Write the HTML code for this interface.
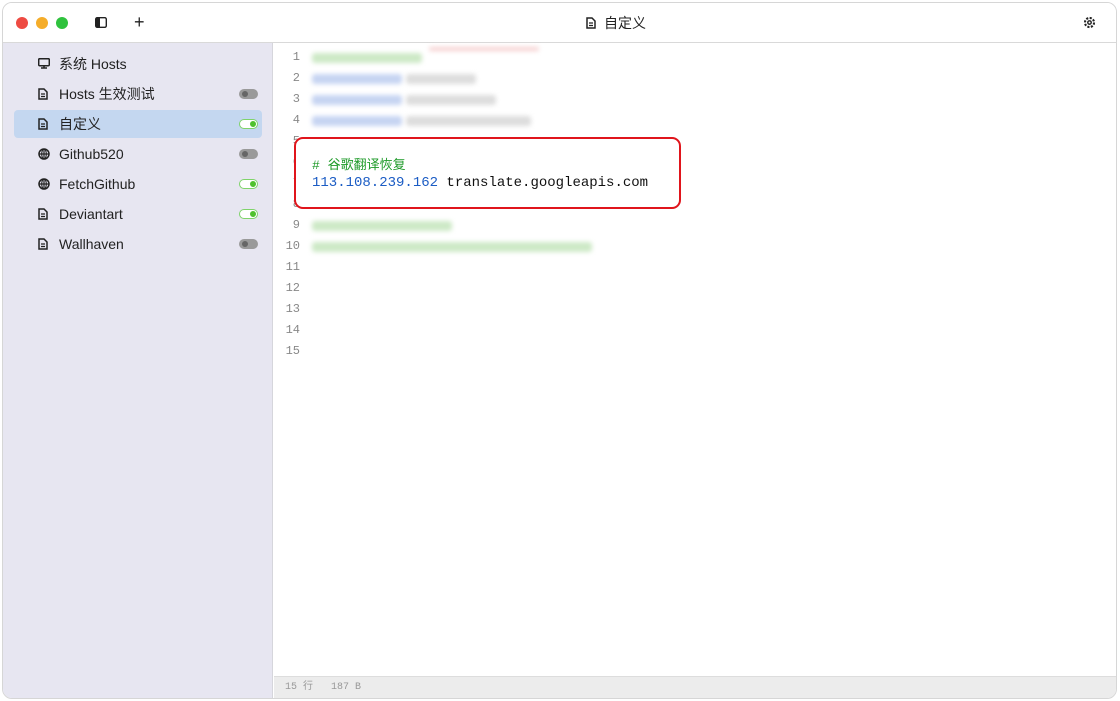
<!DOCTYPE html>
<html><head><meta charset="utf-8"><style>
*{margin:0;padding:0;box-sizing:border-box}
body{width:1120px;height:701px;background:#fff;font-family:"Liberation Sans","Noto Sans CJK SC",sans-serif;position:relative;overflow:hidden}
.win{position:absolute;left:2px;top:2px;width:1115px;height:697px;border:1px solid #d6d6d6;border-radius:10px;overflow:hidden;background:#fff}
.title{position:absolute;left:0;top:0;right:0;height:40px;background:#fff;border-bottom:1px solid #d9d9d9}
.dot{position:absolute;top:14px;width:12px;height:12px;border-radius:50%}
.side{position:absolute;left:0;top:40px;width:270px;bottom:0;background:#e7e6f1;border-right:1px solid #d6d6dc}
.item{position:absolute;left:11px;width:248px;height:28px;font-size:14px;color:#222;line-height:28px;padding-left:45px}
.item.sel{background:#c4d7f0;border-radius:4px}
.ic{position:absolute;left:24px;top:8px}
.tg{position:absolute;right:4px;top:9px;width:19px;height:10px;border-radius:5px;background:#9a9a9a}
.tg::after{content:"";position:absolute;top:2px;left:3px;width:6px;height:6px;border-radius:50%;background:#666}
.tg.on{background:#fff;border:1px solid #7fd36a}
.tg.on::after{left:10px;top:1px;background:#4fc12e}
.ed{position:absolute;left:271px;top:40px;right:0;bottom:22px;background:#fff}
.ln{position:absolute;left:0;width:26px;text-align:right;font-family:"Liberation Mono",monospace;font-size:12px;color:#888}
.blur{position:absolute;height:10px;filter:blur(2.5px);border-radius:3px}
.code{position:absolute;left:38px;font-family:"Liberation Mono","Noto Sans CJK SC",monospace;font-size:14px}
.status{position:absolute;left:271px;right:0;bottom:0;height:22px;background:#ececec;border-top:1px solid #ddd;font-size:10px;color:#999;padding-left:11px;line-height:21px;font-family:"Liberation Mono","Noto Sans CJK SC",monospace}
</style></head><body>
<div class="win">
<div class="title">
<div class="dot" style="left:13px;background:#ee4b42"></div>
<div class="dot" style="left:33px;background:#f5ad2a"></div>
<div class="dot" style="left:53px;background:#2fc23d"></div>
<svg style="position:absolute;left:92px;top:14px" width="12" height="11" viewBox="0 0 12 11"><rect x="0.7" y="0.7" width="10.6" height="9.6" rx="1.5" fill="none" stroke="#222" stroke-width="1.4"/><rect x="1" y="1" width="4" height="9" fill="#222"/></svg>
<div style="position:absolute;left:131px;top:9px;font-size:18px;color:#222">+</div>
<svg style="position:absolute;left:583px;top:14px" width="10" height="12" viewBox="0 0 10 12"><path d="M1 1h5l3 3v7H1z" fill="none" stroke="#222" stroke-width="1.5"/><path d="M3 6h4M3 8.5h4" stroke="#222" stroke-width="1.3"/></svg>
<div style="position:absolute;left:601px;top:10px;font-size:14px;color:#222">自定义</div>
<svg style="position:absolute;left:1080px;top:13px" width="13" height="13" viewBox="0 0 12 12"><circle cx="6" cy="6" r="4.2" fill="none" stroke="#222" stroke-width="1.9" stroke-dasharray="2 1.3"/><circle cx="6" cy="6" r="1.6" fill="none" stroke="#222" stroke-width="1.3"/></svg>
</div>
<div class="side">
<div class="item" style="top:7px"><svg class="ic" width="12" height="11" viewBox="0 0 12 11"><rect x="0.7" y="0.7" width="10.6" height="7" rx="1" fill="none" stroke="#222" stroke-width="1.5"/><path d="M3 10h6M6 8v2" stroke="#222" stroke-width="1.5"/></svg>系统 Hosts</div>
<div class="item" style="top:37px"><svg class="ic" width="10" height="12" viewBox="0 0 10 12"><path d="M1 1h5l3 3v7H1z" fill="none" stroke="#222" stroke-width="1.5"/><path d="M3 6h4M3 8.5h4" stroke="#222" stroke-width="1.3"/></svg>Hosts 生效测试<div class="tg"></div></div>
<div class="item sel" style="top:67px"><svg class="ic" width="10" height="12" viewBox="0 0 10 12"><path d="M1 1h5l3 3v7H1z" fill="none" stroke="#222" stroke-width="1.5"/><path d="M3 6h4M3 8.5h4" stroke="#222" stroke-width="1.3"/></svg>自定义<div class="tg on"></div></div>
<div class="item" style="top:97px"><svg class="ic" width="12" height="12" viewBox="0 0 12 12"><circle cx="6" cy="6" r="5" fill="none" stroke="#222" stroke-width="1.5"/><path d="M1 6h10M6 1v10" stroke="#222" stroke-width="1.2"/><ellipse cx="6" cy="6" rx="2.3" ry="5" fill="none" stroke="#222" stroke-width="1.1"/></svg>Github520<div class="tg"></div></div>
<div class="item" style="top:127px"><svg class="ic" width="12" height="12" viewBox="0 0 12 12"><circle cx="6" cy="6" r="5" fill="none" stroke="#222" stroke-width="1.5"/><path d="M1 6h10M6 1v10" stroke="#222" stroke-width="1.2"/><ellipse cx="6" cy="6" rx="2.3" ry="5" fill="none" stroke="#222" stroke-width="1.1"/></svg>FetchGithub<div class="tg on"></div></div>
<div class="item" style="top:157px"><svg class="ic" width="10" height="12" viewBox="0 0 10 12"><path d="M1 1h5l3 3v7H1z" fill="none" stroke="#222" stroke-width="1.5"/><path d="M3 6h4M3 8.5h4" stroke="#222" stroke-width="1.3"/></svg>Deviantart<div class="tg on"></div></div>
<div class="item" style="top:187px"><svg class="ic" width="10" height="12" viewBox="0 0 10 12"><path d="M1 1h5l3 3v7H1z" fill="none" stroke="#222" stroke-width="1.5"/><path d="M3 6h4M3 8.5h4" stroke="#222" stroke-width="1.3"/></svg>Wallhaven<div class="tg"></div></div>
</div>
<div class="ed">
<div class="ln" style="top:7px">1</div><div class="ln" style="top:28px">2</div><div class="ln" style="top:49px">3</div><div class="ln" style="top:70px">4</div><div class="ln" style="top:91px">5</div><div class="ln" style="top:112px">6</div><div class="ln" style="top:133px">7</div><div class="ln" style="top:154px">8</div><div class="ln" style="top:175px">9</div><div class="ln" style="top:196px">10</div><div class="ln" style="top:217px">11</div><div class="ln" style="top:238px">12</div><div class="ln" style="top:259px">13</div><div class="ln" style="top:280px">14</div><div class="ln" style="top:301px">15</div>
<div class="blur" style="left:38px;top:10px;width:110px;background:#cde9c6"></div>
<div class="blur" style="left:155px;top:4px;width:110px;height:4px;background:#f6d0d0"></div>
<div class="blur" style="left:38px;top:31px;width:90px;background:#c6d4f2"></div><div class="blur" style="left:132px;top:31px;width:70px;background:#ddd"></div>
<div class="blur" style="left:38px;top:52px;width:90px;background:#c6d4f2"></div><div class="blur" style="left:132px;top:52px;width:90px;background:#ddd"></div>
<div class="blur" style="left:38px;top:73px;width:90px;background:#c6d4f2"></div><div class="blur" style="left:132px;top:73px;width:125px;background:#ddd"></div>
<div class="blur" style="left:38px;top:178px;width:140px;background:#cde9c6"></div>
<div class="blur" style="left:38px;top:199px;width:280px;background:#cde9c6"></div>
<div style="position:absolute;left:20px;top:94px;width:387px;height:72px;border:2.5px solid #e0151c;border-radius:9px;background:#fff"></div>
<div class="code" style="top:111px;color:#1d9a28;font-size:13px"># 谷歌翻译恢复</div>
<div class="code" style="top:132px;color:#111"><span style="color:#1b5cc4">113.108.239.162</span> translate.googleapis.com</div>
</div>
<div class="status">15 行 &nbsp; 187 B</div>
</div>
</body></html>
